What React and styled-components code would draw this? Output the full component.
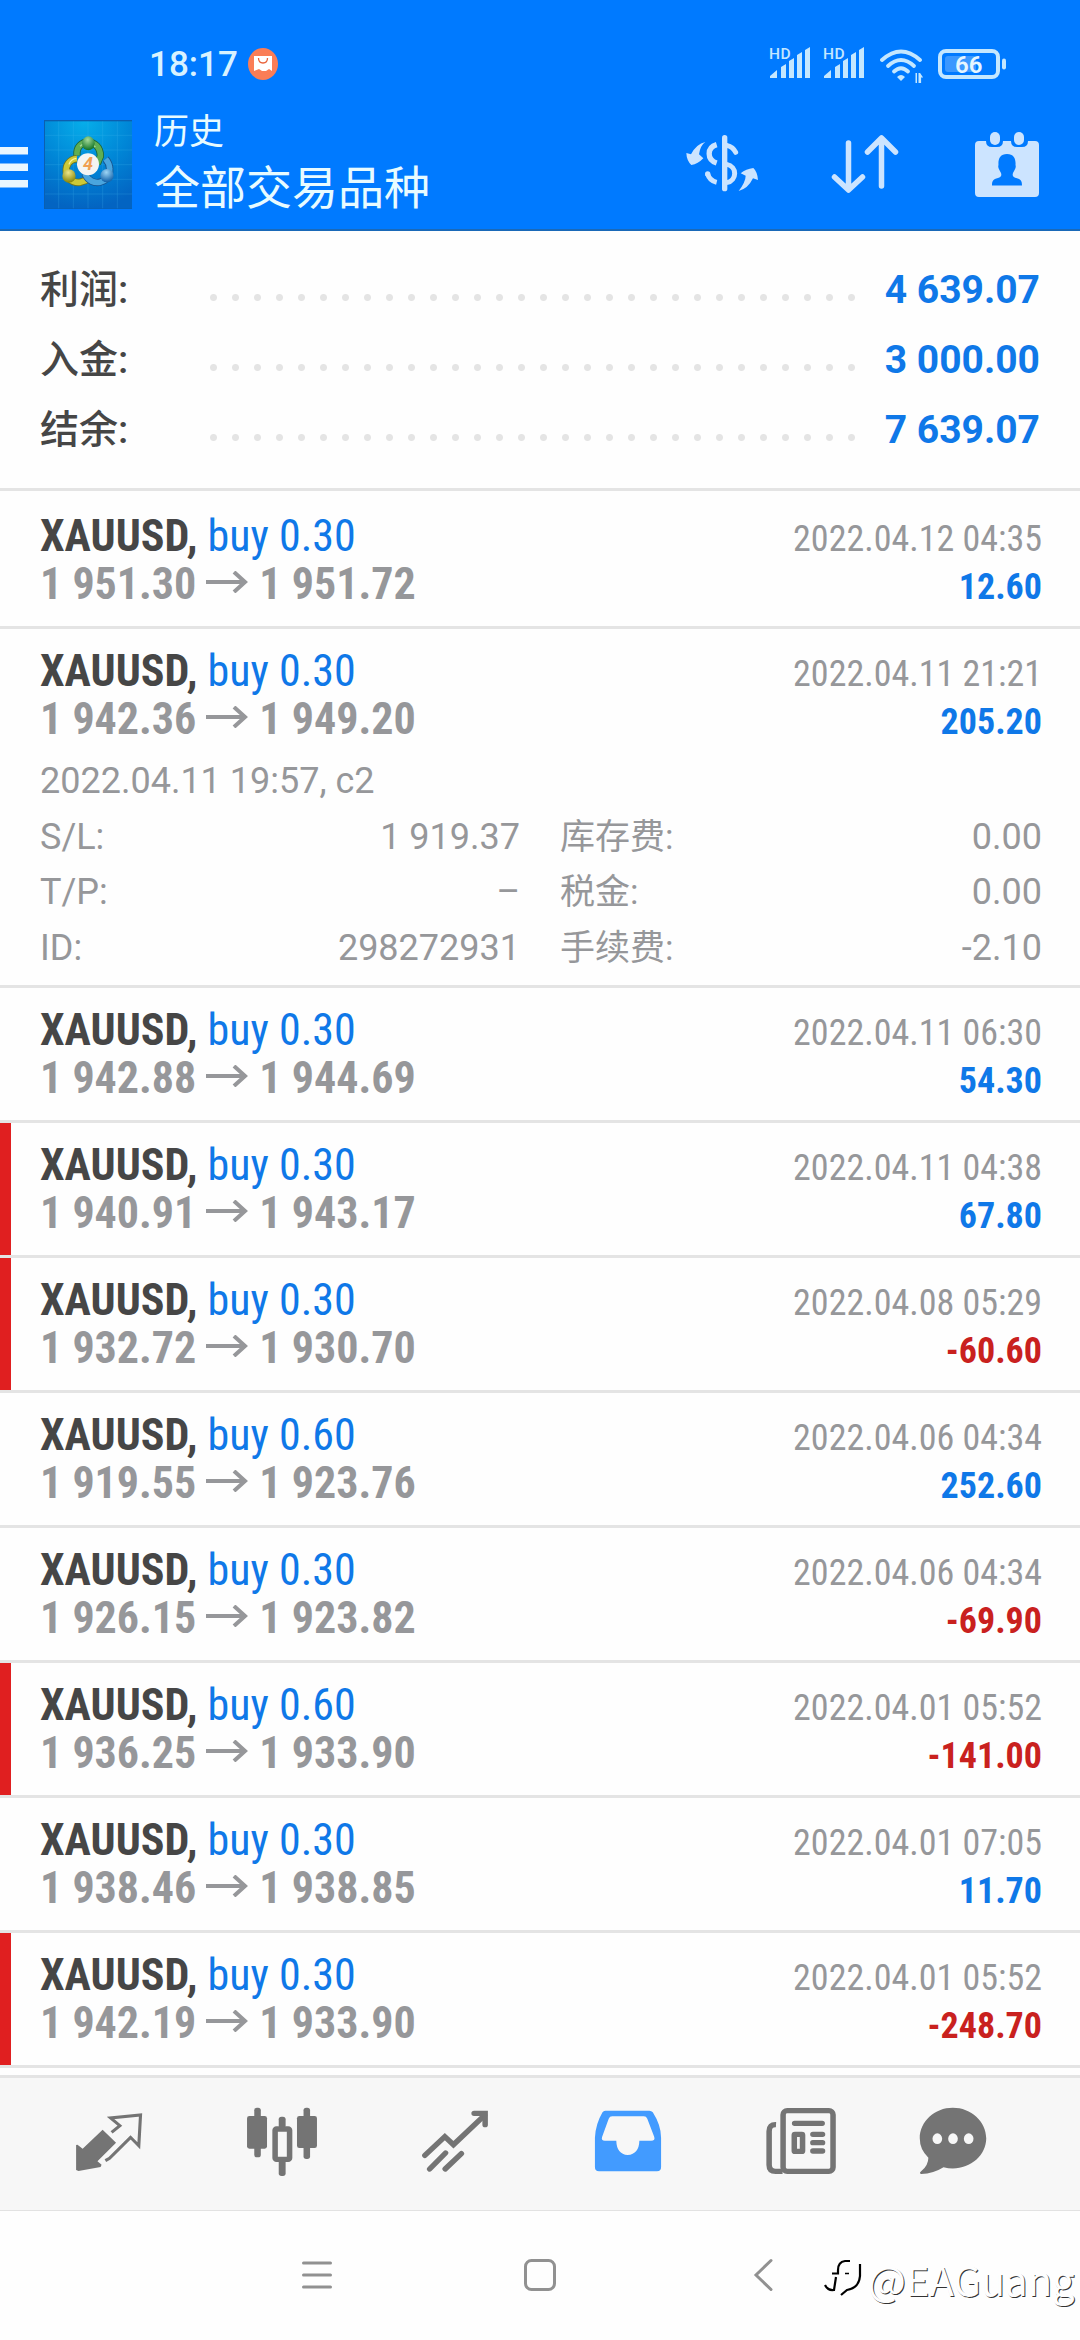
import React from "react";
import styled, { createGlobalStyle } from "styled-components";

const blue = "#007aff";
const textBlue = "#0f78e8";
const red = "#c9211e";
const grey = "#96979a";
const line = "#e4e4e4";
const paleBlue = "#cce4ff";
const statusColor = "#c4e7ff";
const tabGrey = "#747474";

const summary = [
  { label: "利润:", value: "4 639.07" },
  { label: "入金:", value: "3 000.00" },
  { label: "结余:", value: "7 639.07" },
];

const deals = [
  { volume: "0.30", open: "1 951.30", close: "1 951.72", time: "2022.04.12 04:35", profit: "12.60" },
  {
    volume: "0.30",
    open: "1 942.36",
    close: "1 949.20",
    time: "2022.04.11 21:21",
    profit: "205.20",
    details: {
      opened: "2022.04.11 19:57, c2",
      rows: [
        ["S/L:", "1 919.37", "库存费:", "0.00"],
        ["T/P:", "–", "税金:", "0.00"],
        ["ID:", "298272931", "手续费:", "-2.10"],
      ],
    },
  },
  { volume: "0.30", open: "1 942.88", close: "1 944.69", time: "2022.04.11 06:30", profit: "54.30" },
  { volume: "0.30", open: "1 940.91", close: "1 943.17", time: "2022.04.11 04:38", profit: "67.80", marked: true },
  { volume: "0.30", open: "1 932.72", close: "1 930.70", time: "2022.04.08 05:29", profit: "-60.60", marked: true },
  { volume: "0.60", open: "1 919.55", close: "1 923.76", time: "2022.04.06 04:34", profit: "252.60" },
  { volume: "0.30", open: "1 926.15", close: "1 923.82", time: "2022.04.06 04:34", profit: "-69.90" },
  { volume: "0.60", open: "1 936.25", close: "1 933.90", time: "2022.04.01 05:52", profit: "-141.00", marked: true },
  { volume: "0.30", open: "1 938.46", close: "1 938.85", time: "2022.04.01 07:05", profit: "11.70" },
  { volume: "0.30", open: "1 942.19", close: "1 933.90", time: "2022.04.01 05:52", profit: "-248.70", marked: true },
];

function Signal() {
  return (
    <SignalIcon viewBox="0 0 42 32">
      <text x="0" y="12" fontSize="15.5" fontWeight="500" letterSpacing="0.4">
        HD
      </text>
      <path d="M1 31v-2l7-6v8zM12 31V20l5-3v14zM20 31V14l5-3v20zM28 31V8l5-3v26zM36 31V3l5-3v31z" />
    </SignalIcon>
  );
}

function StatusIcons() {
  return (
    <StatusRight>
      <Signal />
      <Signal />
      <WifiIcon viewBox="0 0 44 34">
        <g fill="none" stroke={statusColor} strokeWidth="3.8" strokeLinecap="round">
          <path d="M2 11Q21 -6 40 11" />
          <path d="M8 17Q21 5 34 17" />
          <path d="M14 22.5Q21 16 28 22.5" />
        </g>
        <path d="M17 28q4-4 8 0l-4 4zM32 29l3.5 5V24h1.5v10h-1.5M38.5 34V24h1.6l3 4.5h-2V34z" />
      </WifiIcon>
      <BatteryIcon viewBox="0 0 68 30">
        <rect x="2" y="2" width="58" height="26" rx="6" fill="none" stroke={statusColor} strokeWidth="4" />
        <rect x="7" y="7" width="31" height="16" rx="3" fill="#3b98ff" />
        <rect x="64" y="9.500" width="4" height="11" rx="2" />
        <text x="17" y="23.500" fontSize="24" fontWeight="600" fill="#e6f6ff">
          66
        </text>
      </BatteryIcon>
    </StatusRight>
  );
}

function Logo() {
  return (
    <LogoIcon viewBox="132 61 264 267" preserveAspectRatio="none">
      <defs>
        <radialGradient id="sky" cx="0.45" cy="0" r="1">
          <stop offset="0" stopColor="#06aeea" />
          <stop offset="0.55" stopColor="#0085d6" />
          <stop offset="1" stopColor="#0364c2" />
        </radialGradient>
        <radialGradient id="greenBall" cx="0.45" cy="0.25" r="0.7">
          <stop offset="0" stopColor="#a5dc9a" />
          <stop offset="1" stopColor="#17772b" />
        </radialGradient>
        <radialGradient id="yellowBall" cx="0.45" cy="0.25" r="0.7">
          <stop offset="0" stopColor="#eee68a" />
          <stop offset="1" stopColor="#8c8a0e" />
        </radialGradient>
        <radialGradient id="blueBall" cx="0.45" cy="0.25" r="0.7">
          <stop offset="0" stopColor="#9dd5f5" />
          <stop offset="1" stopColor="#1766ad" />
        </radialGradient>
      </defs>
      <rect x="132" y="61" width="264" height="267" fill="#0b5fb0" />
      <rect x="135" y="65" width="261" height="261" fill="url(#sky)" />
      <path
        d="M176 65v261M220 65v261M264 65v261M308 65v261M352 65v261M135 107h261M135 151h261M135 195h261M135 239h261M135 283h261"
        stroke="#4cc0f2"
        strokeWidth="1.5"
        opacity="0.4"
      />
      <g fill="none" strokeWidth="22">
        <path d="M231 168c-6-54 72-54 70 2l-9 22" stroke="#1d6636" />
        <path d="M231 168c-6-54 72-54 70 2l-9 22" stroke="#5fae53" strokeWidth="17" />
        <path d="M231 177c-48 4-41 77 9 71l21-7" stroke="#6d7421" />
        <path d="M231 177c-48 4-41 77 9 71l21-7" stroke="#cdc936" strokeWidth="17" />
        <path d="M255 222c18 44 78 29 74-14 0-12-5-22-12-30" stroke="#175590" />
        <path d="M255 222c18 44 78 29 74-14 0-12-5-22-12-30" stroke="#4aa5de" strokeWidth="17" />
      </g>
      <path d="M240 140q25-22 46 2" fill="none" stroke="#c6e9b8" strokeWidth="4" opacity="0.7" />
      <path d="M207 194q5-16 22-18" fill="none" stroke="#fbf59c" strokeWidth="4" />
      <ellipse cx="265" cy="131" rx="19" ry="21" fill="url(#greenBall)" />
      <circle cx="207" cy="229" r="20" fill="url(#yellowBall)" />
      <circle cx="321" cy="228" r="20" fill="url(#blueBall)" />
      <circle cx="264" cy="194" r="33" fill="#f4f5f3" />
      <text x="264" y="212" textAnchor="middle" fontSize="54" fontWeight="700" fontStyle="italic" fill="#f0a052">
        4
      </text>
    </LogoIcon>
  );
}

function HeaderIcons() {
  return (
    <>
      <DollarIcon viewBox="48 45 216 171">
        <g fill="none" stroke={paleBlue} strokeWidth="15">
          <path d="M164 53v153" strokeWidth="16" strokeLinecap="round" />
          <path d="M170 76q20 5 27 21" strokeLinecap="round" />
          <path d="M140 74C110 83 110 119 140 129" strokeWidth="16" />
          <path d="M113 162q6 20 27 25" />
          <path d="M170 133C202 139 202 181 170 188" />
        </g>
        <circle cx="113" cy="162" r="8" />
        <path d="M106 66Q91 76 87 103l13 12q-16 17-36 20q-14-13-15-36l14 4q16-31 43-37z" />
        <path d="M206 213Q227 185 227 167l-15-7q16-13 38-16q12 11 14 36l-15-5q-15 31-43 38z" />
      </DollarIcon>
      <SortIcon viewBox="0 0 68 58">
        <path
          d="M17.500 8v46M3.500 42l14 13 14-13M50.500 51V4M36.500 17l14-14 14 14"
          fill="none"
          stroke={paleBlue}
          strokeWidth="5.500"
          strokeLinecap="round"
          strokeLinejoin="round"
        />
      </SortIcon>
      <CalendarIcon viewBox="0 0 64 65">
        <path d="M4 9h7q0 6 6 6h5q6 0 6-6h8q0 6 6 6h5q6 0 6-6h7q4 0 4 4v48q0 4-4 4H4q-4 0-4-4V13q0-4 4-4z" />
        <rect x="15" y="0" width="10" height="13" rx="5" />
        <rect x="39" y="0" width="10" height="13" rx="5" />
        <path
          d="M32 22c7 0 9 5 8.500 11 1 3-1 5-2.500 8-1 3 .5 4 3 5 5 1 6 3 6 7.500H17c0-4.500 1-6.500 6-7.500 2.500-1 4-2 3-5-1.500-3-3.500-5-2.500-8-.5-6 1.500-11 8.500-11z"
          fill={blue}
        />
      </CalendarIcon>
    </>
  );
}

function Deal({ deal }) {
  const { volume, open, close, time, profit, details, marked } = deal;
  return (
    <DealRow $marked={marked}>
      <DealLine>
        <Symbol>XAUUSD,</Symbol>
        <Volume>buy {volume}</Volume>
        <Time>{time}</Time>
      </DealLine>
      <DealLine>
        <Price>{open}</Price>
        <Arrow viewBox="0 0 43 22">
          <path d="M0 11h40M28 1l11 10-11 10" fill="none" stroke={grey} strokeWidth="4" />
        </Arrow>
        <Price>{close}</Price>
        <Profit $loss={profit.startsWith("-")}>{profit}</Profit>
      </DealLine>
      {details && (
        <Details>
          <DetailLine>{details.opened}</DetailLine>
          {details.rows.map(([left, leftValue, right, rightValue]) => (
            <DetailLine key={left}>
              <DetailCell $width={480}>
                <span>{left}</span>
                <span>{leftValue}</span>
              </DetailCell>
              <DetailCell $width={482}>
                <Cjk>{right.replace(":", ":")}</Cjk>
                <span>{rightValue}</span>
              </DetailCell>
            </DetailLine>
          ))}
        </Details>
      )}
    </DealRow>
  );
}

function TabBar() {
  return (
    <Tabs>
      <Tab>
        <TabIcon viewBox="210 195 209 216">
          <path d="M219 315l4-1 15 12 58-57 39 39-54 56 12 10-3 7-64 12-7-3z" />
          <path
            d="M322 277l24-20-27-23 87-9-5 92-24-25-61 63-12 7"
            fill="none"
            stroke={tabGrey}
            strokeWidth="9"
          />
        </TabIcon>
      </Tab>
      <Tab>
        <TabIcon viewBox="711 195 209 216">
          <rect x="735" y="203" width="19" height="149" rx="8" />
          <rect x="714" y="228" width="58" height="98" rx="7" />
          <rect x="878" y="203" width="19" height="154" rx="8" />
          <rect x="859" y="228" width="58" height="96" rx="7" />
          <rect x="806" y="230" width="20" height="34" rx="8" />
          <rect x="806" y="355" width="20" height="53" rx="8" />
          <rect x="795.500" y="267" width="42" height="91" rx="4" fill="none" stroke={tabGrey} strokeWidth="16" />
        </TabIcon>
      </Tab>
      <Tab>
        <TabIcon viewBox="1214 195 209 216">
          <path
            d="M1231 346l58-56 25 24 90-88M1245 387l46-48M1290 387l47-46"
            fill="none"
            stroke={tabGrey}
            strokeWidth="16"
            strokeLinecap="round"
          />
          <path d="M1374 220h32v34" fill="none" stroke={tabGrey} strokeWidth="16" strokeLinecap="round" />
        </TabIcon>
      </Tab>
      <Tab>
        <TabIcon viewBox="149.500 195 209 216" $active>
          <path
            fillRule="evenodd"
            d="M188 212H316Q322 212 326 217Q350 256 350 293V382Q350 394 338 394H170Q158 394 158 382V293Q160 252 180 217Q183 212 188 212ZM208 229Q201 229 198 236L179 290Q175 302 187 302H220Q221 342 253 345Q286 342 287 302H321Q334 302 330 290L310 236Q307 229 300 229Z"
          />
        </TabIcon>
      </Tab>
      <Tab>
        <TabIcon viewBox="653 195 209 216">
          <rect x="705.500" y="212" width="145" height="182" rx="12" fill="none" stroke={tabGrey} strokeWidth="16" />
          <path d="M685 254q-20-1-20 20v101q0 19 19 19h20" fill="none" stroke={tabGrey} strokeWidth="16" />
          <path
            d="M739 250h80M792 283h28M792 308h28M792 333h28"
            fill="none"
            stroke={tabGrey}
            strokeWidth="16"
            strokeLinecap="round"
          />
          <rect x="738" y="283" width="24" height="51" rx="2" fill="none" stroke={tabGrey} strokeWidth="16" />
        </TabIcon>
      </Tab>
      <Tab $width={131}>
        <TabIcon viewBox="1095 195 209 216">
          <path d="M1199 203C1252 203 1296 244 1296 295C1296 354 1235 399 1172 382Q1143 401 1107 402Q1100 400 1107 394Q1128 376 1128 353Q1103 329 1103 295C1103 244 1146 203 1199 203Z" />
          <g fill="#f7f7f7">
            <ellipse cx="1154" cy="296" rx="14" ry="16" />
            <ellipse cx="1199.500" cy="296" rx="14" ry="16" />
            <ellipse cx="1245" cy="296" rx="14" ry="16" />
          </g>
        </TabIcon>
      </Tab>
    </Tabs>
  );
}

function SystemBar() {
  return (
    <System>
      <NavIcon viewBox="0 0 36 36">
        <path d="M4.500 6h27M4.500 18h27M4.500 30h27" />
      </NavIcon>
      <NavIcon viewBox="0 0 36 36">
        <rect x="3.500" y="3.500" width="29" height="29" rx="6" />
      </NavIcon>
      <NavIcon viewBox="0 0 36 36">
        <path d="M26 3.500L11 18l15 14.500" />
      </NavIcon>
      <Watermark>
        <WatermarkLogo viewBox="0 0 40 42">
          <g fill="none" stroke="#000" strokeWidth="2.200">
            <path d="M26 3H21Q14 4 14 12V15.500H8" />
            <path d="M36 6V18Q35 30 23 32L17 37" />
            <path d="M1 27q3 6 9 5l2-13" />
            <path d="M21 15.500h4" strokeWidth="1.500" />
          </g>
        </WatermarkLogo>
        @EAGuang
      </Watermark>
    </System>
  );
}

function App() {
  return (
    <Screen>
      <GlobalStyle />
      <Header>
        <StatusBar>
          <Clock>18:17</Clock>
          <Notice viewBox="0 0 30 32">
            <ellipse cx="15" cy="16" rx="15" ry="16" fill="#fa7d56" />
            <path d="M6 8h18v15l-3-2-3 2h-4l-3-2-5 2z" fill="#fff" />
            <path d="M10.500 10q0 5 4.500 5t4.500-5" fill="none" stroke="#e9633b" strokeWidth="1.300" />
          </Notice>
          <StatusIcons />
        </StatusBar>
        <Toolbar>
          <MenuIcon viewBox="0 0 28 41">
            <path d="M0 0h28v7.500H0zM0 16.500h28V24H0zM0 33h28v7.500H0z" />
          </MenuIcon>
          <Logo />
          <Titles>
            <Title>历史</Title>
            <Subtitle>全部交易品种</Subtitle>
          </Titles>
          <HeaderIcons />
        </Toolbar>
      </Header>
      <Summary>
        {summary.map((item) => (
          <SummaryRow key={item.label}>
            <SummaryLabel>{item.label.replace(":", ":")}</SummaryLabel>
            <Dots />
            <SummaryValue>{item.value}</SummaryValue>
          </SummaryRow>
        ))}
      </Summary>
      <DealList>
        {deals.map((deal) => (
          <Deal key={deal.open} deal={deal} />
        ))}
      </DealList>
      <TabBar />
      <SystemBar />
    </Screen>
  );
}

const GlobalStyle = createGlobalStyle`
  * {
    box-sizing: border-box;
  }
  body {
    margin: 0;
    background-color: #fefefe;
    font-family: Roboto, "Noto Sans CJK SC", sans-serif;
  }
  svg {
    display: block;
    flex-shrink: 0;
  }
`;

const Screen = styled.div`
  width: 1080px;
  height: 2340px;
  display: flex;
  flex-direction: column;
  overflow: hidden;
`;

const Header = styled.header`
  height: 231px;
  background-color: ${blue};
  border-bottom: 2px solid #1a69b8;
`;

const StatusBar = styled.div`
  height: 110px;
  padding: 47px 74px 0 149px;
  display: flex;
  align-items: flex-start;
`;

const Clock = styled.div`
  width: 99px;
  font-size: 35px;
  font-weight: 500;
  line-height: 35px;
  color: #d8f2ff;
`;

const Notice = styled.svg`
  width: 30px;
  height: 32px;
  margin-top: 1px;
`;

const StatusRight = styled.div`
  display: flex;
  align-items: flex-start;
  margin-left: auto;
  fill: ${statusColor};
`;

const SignalIcon = styled.svg`
  width: 42px;
  height: 32px;
  margin-right: 12px;
`;

const WifiIcon = styled.svg`
  width: 44px;
  height: 34px;
  margin: 2px 14px 0 3px;
`;

const BatteryIcon = styled.svg`
  width: 68px;
  height: 30px;
  margin-top: 2px;
`;

const Toolbar = styled.div`
  display: flex;
  align-items: flex-start;
  padding-right: 40px;
  fill: ${paleBlue};
`;

const MenuIcon = styled.svg`
  width: 28px;
  height: 41px;
  margin: 37px 16px 0 0;
  fill: #e9f6ff;
`;

const LogoIcon = styled.svg`
  width: 88px;
  height: 89px;
  margin-top: 10px;
`;

const Titles = styled.div`
  width: 532px;
  margin-left: 22px;
  color: #e8fbff;
`;

const Title = styled.div`
  height: 50px;
  font-size: 35px;
  line-height: 46px;
`;

const Subtitle = styled.div`
  height: 60px;
  font-size: 46px;
  line-height: 57px;
`;

const DollarIcon = styled.svg`
  width: 72px;
  height: 57px;
  margin: 25px 73px 0 0;
`;

const SortIcon = styled.svg`
  width: 68px;
  height: 58px;
  margin: 25px 76px 0 0;
`;

const CalendarIcon = styled.svg`
  width: 64px;
  height: 65px;
  margin-top: 22px;
`;

const Summary = styled.section`
  height: 260px;
  padding: 24px 40px 0;
  border-bottom: 3px solid ${line};
`;

const SummaryRow = styled.div`
  height: 70px;
  display: flex;
  align-items: center;
`;

const SummaryLabel = styled.div`
  width: 170px;
  font-size: 39px;
  font-weight: 500;
  line-height: 70px;
  color: #464646;
`;

const Dots = styled.div`
  width: 653px;
  height: 7px;
  margin-top: 15px;
  background: radial-gradient(circle at 3.500px 3.500px, ${line} 3px, transparent 4px) 0 0 / 22px 7px repeat-x;
`;

const SummaryValue = styled.div`
  margin-left: auto;
  font-size: 39px;
  font-weight: 700;
  color: ${textBlue};
`;

const DealList = styled.main`
  height: 1584px;
  padding-top: 3px;
`;

const DealRow = styled.article`
  min-height: 135px;
  padding: 18px 38px 9px 40px;
  border-bottom: 3px solid ${line};
  background: ${(props) => (props.$marked ? "linear-gradient(#e01f20, #e01f20) 0 0 / 11px 100% no-repeat" : "none")};
`;

const DealLine = styled.div`
  height: 48px;
  display: flex;
  align-items: baseline;
  font-family: "Roboto Condensed", Roboto, sans-serif;
  font-stretch: condensed;
  font-size: 44px;
  line-height: 48px;
  white-space: nowrap;
`;

const Symbol = styled.span`
  font-weight: 700;
  color: #464646;
`;

const Volume = styled.span`
  margin-left: 10px;
  color: ${textBlue};
`;

const Time = styled.span`
  margin-left: auto;
  font-size: 36px;
  color: ${grey};
`;

const Price = styled.span`
  font-weight: 700;
  color: ${grey};
`;

const Arrow = styled.svg`
  width: 43px;
  height: 22px;
  margin: 0 10px;
  align-self: flex-start;
  position: relative;
  top: 11px;
`;

const Profit = styled.span`
  margin-left: auto;
  font-size: 36px;
  font-weight: 700;
  color: ${(props) => (props.$loss ? red : textBlue)};
`;

const Details = styled.div`
  margin-top: 11px;
  font-size: 36px;
  color: ${grey};
`;

const DetailLine = styled.div`
  height: 55.5px;
  line-height: 55.5px;
  display: flex;
  justify-content: space-between;
`;

const DetailCell = styled.div`
  width: ${(props) => props.$width}px;
  display: flex;
  justify-content: space-between;
`;

const Cjk = styled.span`
  font-size: 35px;
`;

const Tabs = styled.nav`
  height: 136px;
  padding: 27px 0 0 22px;
  display: flex;
  background-color: #f7f7f7;
  border-top: 3px solid ${line};
  border-bottom: 1px solid #e2e2e2;
`;

const Tab = styled.div`
  width: ${(props) => props.$width || 173}px;
  display: flex;
  justify-content: center;
`;

const TabIcon = styled.svg.attrs({ preserveAspectRatio: "none" })`
  width: 72px;
  height: 72px;
  fill: ${(props) => (props.$active ? "#429bff" : tabGrey)};
`;

const System = styled.footer`
  position: relative;
  height: 129px;
  padding: 46px 0 0 299px;
  display: flex;
  gap: 187px;
`;

const NavIcon = styled.svg`
  width: 36px;
  height: 36px;
  fill: none;
  stroke: #919191;
  stroke-width: 3;
  stroke-linecap: round;
`;

const Watermark = styled.div`
  position: absolute;
  left: 824px;
  top: 38px;
  display: flex;
  align-items: center;
  gap: 4px;
  font-family: "Noto Sans CJK SC", sans-serif;
  font-size: 40px;
  line-height: 60px;
  color: #fefefe;
  text-shadow: 1px 1px 0 #333;
`;

const WatermarkLogo = styled.svg`
  width: 40px;
  height: 42px;
`;

export default App;
